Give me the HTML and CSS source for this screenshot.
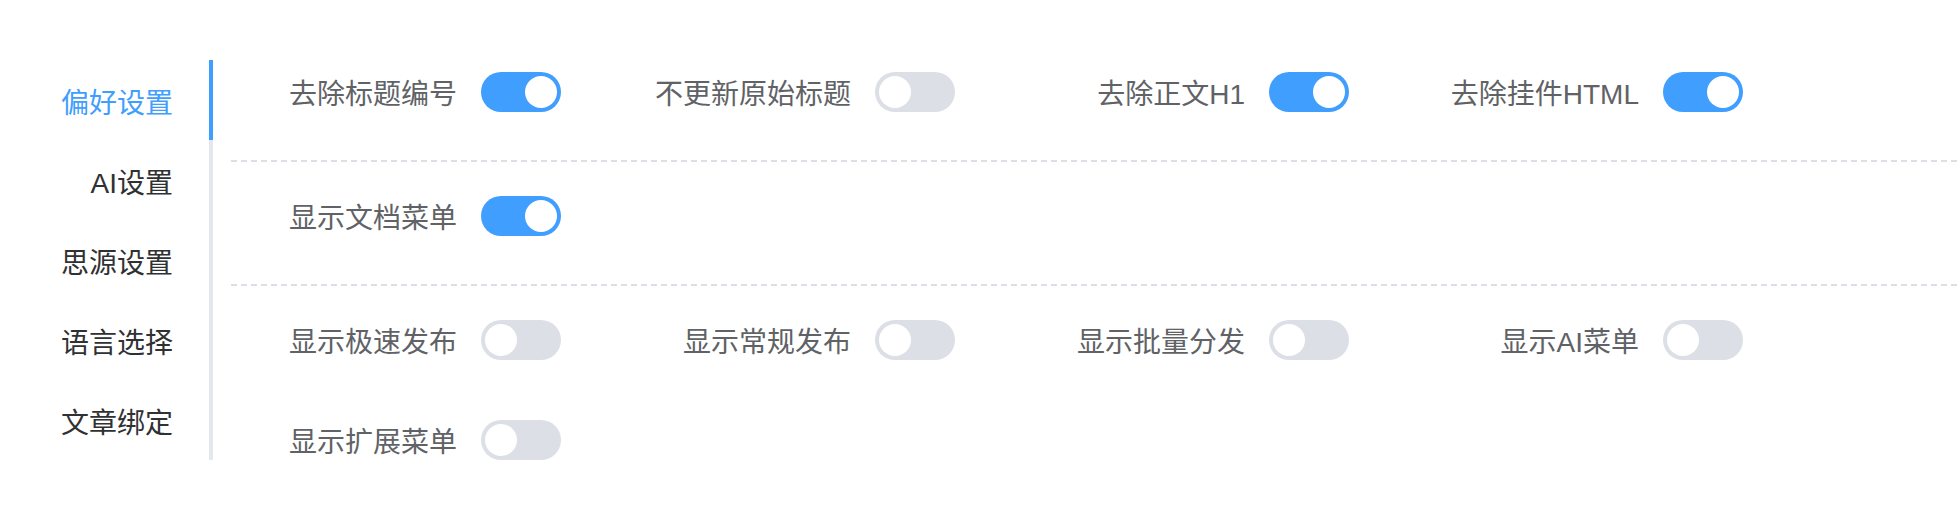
FILE: index.html
```html
<!DOCTYPE html>
<html lang="zh-CN">
<head>
<meta charset="utf-8">
<title>设置</title>
<link rel="stylesheet" href="styles.css">
</head>
<body>
<div class="tabs">
  <div class="tabs-header">
    <div class="tab-list">
      <div class="tab active">偏好设置</div>
      <div class="tab">AI设置</div>
      <div class="tab">思源设置</div>
      <div class="tab">语言选择</div>
      <div class="tab">文章绑定</div>
    </div>
  </div>
  <div class="tabs-content">
    <div class="group">
      <div class="item"><span class="label">去除标题编号</span><span class="switch on"></span></div>
      <div class="item"><span class="label">不更新原始标题</span><span class="switch"></span></div>
      <div class="item"><span class="label">去除正文H1</span><span class="switch on"></span></div>
      <div class="item"><span class="label">去除挂件HTML</span><span class="switch on"></span></div>
    </div>
    <div class="divider"></div>
    <div class="group">
      <div class="item"><span class="label">显示文档菜单</span><span class="switch on"></span></div>
    </div>
    <div class="divider"></div>
    <div class="group">
      <div class="item"><span class="label">显示极速发布</span><span class="switch"></span></div>
      <div class="item"><span class="label">显示常规发布</span><span class="switch"></span></div>
      <div class="item"><span class="label">显示批量分发</span><span class="switch"></span></div>
      <div class="item"><span class="label">显示AI菜单</span><span class="switch"></span></div>
      <div class="item"><span class="label">显示扩展菜单</span><span class="switch"></span></div>
    </div>
  </div>
</div>
</body>
</html>
```

FILE: styles.css
```css
html, body {
  margin: 0;
  padding: 0;
  background: #ffffff;
}

body {
  font-family: "Liberation Sans", "Noto Sans CJK SC", sans-serif;
  font-size: 28px;
}

.tabs {
  display: flex;
  align-items: flex-start;
  margin-top: 60px;
}

.tabs-header {
  flex: 0 0 auto;
  margin-right: 18px;
}

.tab-list {
  width: 209px;
  border-right: 4px solid #e4e7ed;
}

.tab {
  position: relative;
  height: 80px;
  line-height: 88px;
  padding: 0 36px 0 40px;
  text-align: right;
  color: #303133;
  font-size: 28px;
  white-space: nowrap;
}

.tab.active {
  color: #409eff;
}

.tab.active::after {
  content: "";
  position: absolute;
  top: 0;
  right: -4px;
  width: 4px;
  height: 80px;
  background: #409eff;
}

.tabs-content {
  flex: 1 1 auto;
  padding-top: 12px;
}

.group {
  display: flex;
  flex-wrap: wrap;
  column-gap: 64px;
  row-gap: 60px;
}

.item {
  display: flex;
  align-items: flex-start;
  height: 40px;
}

.label {
  width: 250px;
  height: 40px;
  box-sizing: border-box;
  padding-right: 24px;
  text-align: right;
  color: #606266;
  font-size: 28px;
  line-height: 46px;
  white-space: nowrap;
}

.switch {
  position: relative;
  display: inline-block;
  width: 80px;
  height: 40px;
  border-radius: 20px;
  background: #dcdfe6;
}

.switch::after {
  content: "";
  position: absolute;
  top: 4px;
  left: 4px;
  width: 32px;
  height: 32px;
  border-radius: 50%;
  background: #ffffff;
}

.switch.on {
  background: #409eff;
}

.switch.on::after {
  left: 44px;
}

.divider {
  height: 2px;
  margin: 48px 0 34px;
  background-image: repeating-linear-gradient(to right, #dcdfe6 0, #dcdfe6 6px, transparent 6px, transparent 10px);
}
```
